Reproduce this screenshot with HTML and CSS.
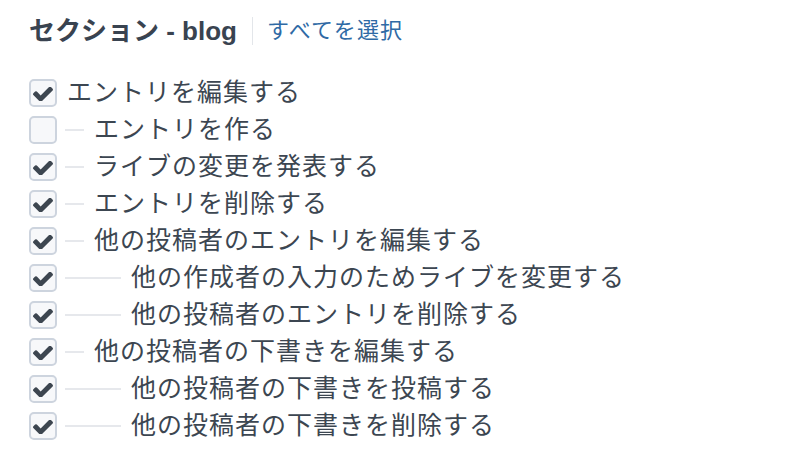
FILE: index.html
```html
<!DOCTYPE html>
<html lang="ja">
<head>
<meta charset="utf-8">
<link rel="stylesheet" href="styles.css">
</head>
<body>
<div class="page">
  <div class="header">
    <h2 class="title">セクション - blog</h2>
    <span class="sep"></span>
    <a class="select-all" href="#">すべてを選択</a>
  </div>
  <ul class="perms">
    <li class="perm lvl0"><span class="cb on"><svg viewBox="121 402 1550 1020"><path d="M1671 566q0 40-28 68l-724 724-136 136q-28 28-68 28t-68-28l-136-136-362-362q-28-28-28-68t28-68l136-136q28-28 68-28t68 28l294 295 656-657q28-28 68-28t68 28l136 136q28 28 28 68z"/></svg></span><span class="label">エントリを編集する</span></li>
    <li class="perm lvl1"><span class="cb"></span><span class="conn"></span><span class="label">エントリを作る</span></li>
    <li class="perm lvl1"><span class="cb on"><svg viewBox="121 402 1550 1020"><path d="M1671 566q0 40-28 68l-724 724-136 136q-28 28-68 28t-68-28l-136-136-362-362q-28-28-28-68t28-68l136-136q28-28 68-28t68 28l294 295 656-657q28-28 68-28t68 28l136 136q28 28 28 68z"/></svg></span><span class="conn"></span><span class="label">ライブの変更を発表する</span></li>
    <li class="perm lvl1"><span class="cb on"><svg viewBox="121 402 1550 1020"><path d="M1671 566q0 40-28 68l-724 724-136 136q-28 28-68 28t-68-28l-136-136-362-362q-28-28-28-68t28-68l136-136q28-28 68-28t68 28l294 295 656-657q28-28 68-28t68 28l136 136q28 28 28 68z"/></svg></span><span class="conn"></span><span class="label">エントリを削除する</span></li>
    <li class="perm lvl1"><span class="cb on"><svg viewBox="121 402 1550 1020"><path d="M1671 566q0 40-28 68l-724 724-136 136q-28 28-68 28t-68-28l-136-136-362-362q-28-28-28-68t28-68l136-136q28-28 68-28t68 28l294 295 656-657q28-28 68-28t68 28l136 136q28 28 28 68z"/></svg></span><span class="conn"></span><span class="label">他の投稿者のエントリを編集する</span></li>
    <li class="perm lvl2"><span class="cb on"><svg viewBox="121 402 1550 1020"><path d="M1671 566q0 40-28 68l-724 724-136 136q-28 28-68 28t-68-28l-136-136-362-362q-28-28-28-68t28-68l136-136q28-28 68-28t68 28l294 295 656-657q28-28 68-28t68 28l136 136q28 28 28 68z"/></svg></span><span class="conn"></span><span class="label">他の作成者の入力のためライブを変更する</span></li>
    <li class="perm lvl2"><span class="cb on"><svg viewBox="121 402 1550 1020"><path d="M1671 566q0 40-28 68l-724 724-136 136q-28 28-68 28t-68-28l-136-136-362-362q-28-28-28-68t28-68l136-136q28-28 68-28t68 28l294 295 656-657q28-28 68-28t68 28l136 136q28 28 28 68z"/></svg></span><span class="conn"></span><span class="label">他の投稿者のエントリを削除する</span></li>
    <li class="perm lvl1"><span class="cb on"><svg viewBox="121 402 1550 1020"><path d="M1671 566q0 40-28 68l-724 724-136 136q-28 28-68 28t-68-28l-136-136-362-362q-28-28-28-68t28-68l136-136q28-28 68-28t68 28l294 295 656-657q28-28 68-28t68 28l136 136q28 28 28 68z"/></svg></span><span class="conn"></span><span class="label">他の投稿者の下書きを編集する</span></li>
    <li class="perm lvl2"><span class="cb on"><svg viewBox="121 402 1550 1020"><path d="M1671 566q0 40-28 68l-724 724-136 136q-28 28-68 28t-68-28l-136-136-362-362q-28-28-28-68t28-68l136-136q28-28 68-28t68 28l294 295 656-657q28-28 68-28t68 28l136 136q28 28 28 68z"/></svg></span><span class="conn"></span><span class="label">他の投稿者の下書きを投稿する</span></li>
    <li class="perm lvl2"><span class="cb on"><svg viewBox="121 402 1550 1020"><path d="M1671 566q0 40-28 68l-724 724-136 136q-28 28-68 28t-68-28l-136-136-362-362q-28-28-28-68t28-68l136-136q28-28 68-28t68 28l294 295 656-657q28-28 68-28t68 28l136 136q28 28 28 68z"/></svg></span><span class="conn"></span><span class="label">他の投稿者の下書きを削除する</span></li>
  </ul>
</div>
</body>
</html>
```

FILE: styles.css
```css
html, body {
  margin: 0;
  padding: 0;
  background: #ffffff;
}

.page {
  padding: 16px 0 0 29px;
  font-family: "Liberation Sans", "Noto Sans CJK JP", sans-serif;
  color: #3c4651;
}

.header {
  display: flex;
  align-items: center;
  height: 30px;
}

.title {
  margin: 0;
  font-size: 26px;
  font-weight: bold;
  line-height: 30px;
  color: #394350;
}

.sep {
  width: 1px;
  height: 28px;
  background: #e3e6ea;
  margin: 0 14px 0 15px;
}

.select-all {
  font-size: 22px;
  line-height: 30px;
  letter-spacing: 1.2px;
  color: #2f6aa5;
  text-decoration: none;
}

.perms {
  list-style: none;
  margin: 28px 0 0 0;
  padding: 0;
}

.perm {
  display: flex;
  align-items: center;
  height: 37px;
}

.cb {
  box-sizing: border-box;
  width: 28px;
  height: 28px;
  border: 2px solid #cdd4de;
  border-radius: 5px;
  background: #f7f8fa;
  display: flex;
  align-items: center;
  justify-content: center;
  flex: none;
}

.cb svg {
  width: 20px;
  height: 14px;
  fill: #3d4650;
  margin-top: 2px;
}

.conn {
  height: 2px;
  background: #e6e8ec;
  margin: 0 10px 0 8px;
  flex: none;
}

.lvl1 .conn {
  width: 19px;
}

.lvl2 .conn {
  width: 56px;
}

.lvl0 .label {
  margin-left: 10px;
}

.label {
  font-size: 25px;
  line-height: 37px;
  letter-spacing: 1px;
  white-space: nowrap;
}
```
